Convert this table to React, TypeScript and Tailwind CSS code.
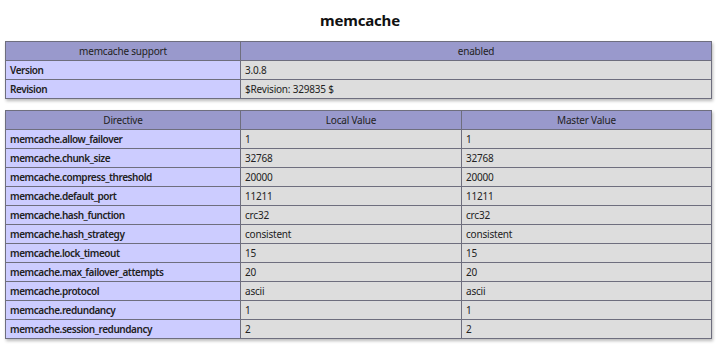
import React from 'react';

const info = [
  ['Version', '3.0.8'],
  ['Revision', '$Revision: 329835 $'],
];

const directives = [
  ['memcache.allow_failover', '1', '1'],
  ['memcache.chunk_size', '32768', '32768'],
  ['memcache.compress_threshold', '20000', '20000'],
  ['memcache.default_port', '11211', '11211'],
  ['memcache.hash_function', 'crc32', 'crc32'],
  ['memcache.hash_strategy', 'consistent', 'consistent'],
  ['memcache.lock_timeout', '15', '15'],
  ['memcache.max_failover_attempts', '20', '20'],
  ['memcache.protocol', 'ascii', 'ascii'],
  ['memcache.redundancy', '1', '1'],
  ['memcache.session_redundancy', '2', '2'],
];

const th = 'h-[19px] border border-[#6e6e7e] bg-[#9999cc] px-1 py-0 font-normal text-center align-middle';
const tdE = 'h-[19px] border border-[#6e6e7e] bg-[#ccccff] px-1 py-0 font-semibold tracking-[-0.45px] text-left align-middle';
const tdV = 'h-[19px] border border-[#6e6e7e] bg-[#dddddd] px-1 py-0 text-left align-middle';

export default function App() {
  return (
    <div className="w-[720px] h-[348px] bg-white text-[10px] tracking-[-0.2px] leading-[18px] text-[#222] font-['Noto_Sans','Open_Sans',sans-serif] overflow-hidden">
      <h1 className="pt-[9px] h-[41px] text-center text-[15px] tracking-[-0.2px] font-bold leading-[22px] text-[#111]">memcache</h1>

      {/* support table */}
      <table className="ml-[5px] w-[707px] border-collapse table-fixed shadow-[1px_2px_3px_#bbb]">
        <colgroup>
          <col className="w-[235px]" />
          <col />
        </colgroup>
        <thead>
          <tr>
            <th className={th}>memcache support</th>
            <th className={th}>enabled</th>
          </tr>
        </thead>
        <tbody>
          {info.map(([k, v]) => (
            <tr key={k}>
              <td className={tdE}>{k}</td>
              <td className={tdV}>{v}</td>
            </tr>
          ))}
        </tbody>
      </table>

      {/* directives table */}
      <table className="ml-[5px] mt-[11px] w-[707px] border-collapse table-fixed shadow-[1px_2px_3px_#bbb]">
        <colgroup>
          <col className="w-[235px]" />
          <col className="w-[221px]" />
          <col />
        </colgroup>
        <thead>
          <tr>
            <th className={th}>Directive</th>
            <th className={th}>Local Value</th>
            <th className={th}>Master Value</th>
          </tr>
        </thead>
        <tbody>
          {directives.map(([k, l, m]) => (
            <tr key={k}>
              <td className={tdE}>{k}</td>
              <td className={tdV}>{l}</td>
              <td className={tdV}>{m}</td>
            </tr>
          ))}
        </tbody>
      </table>
    </div>
  );
}
